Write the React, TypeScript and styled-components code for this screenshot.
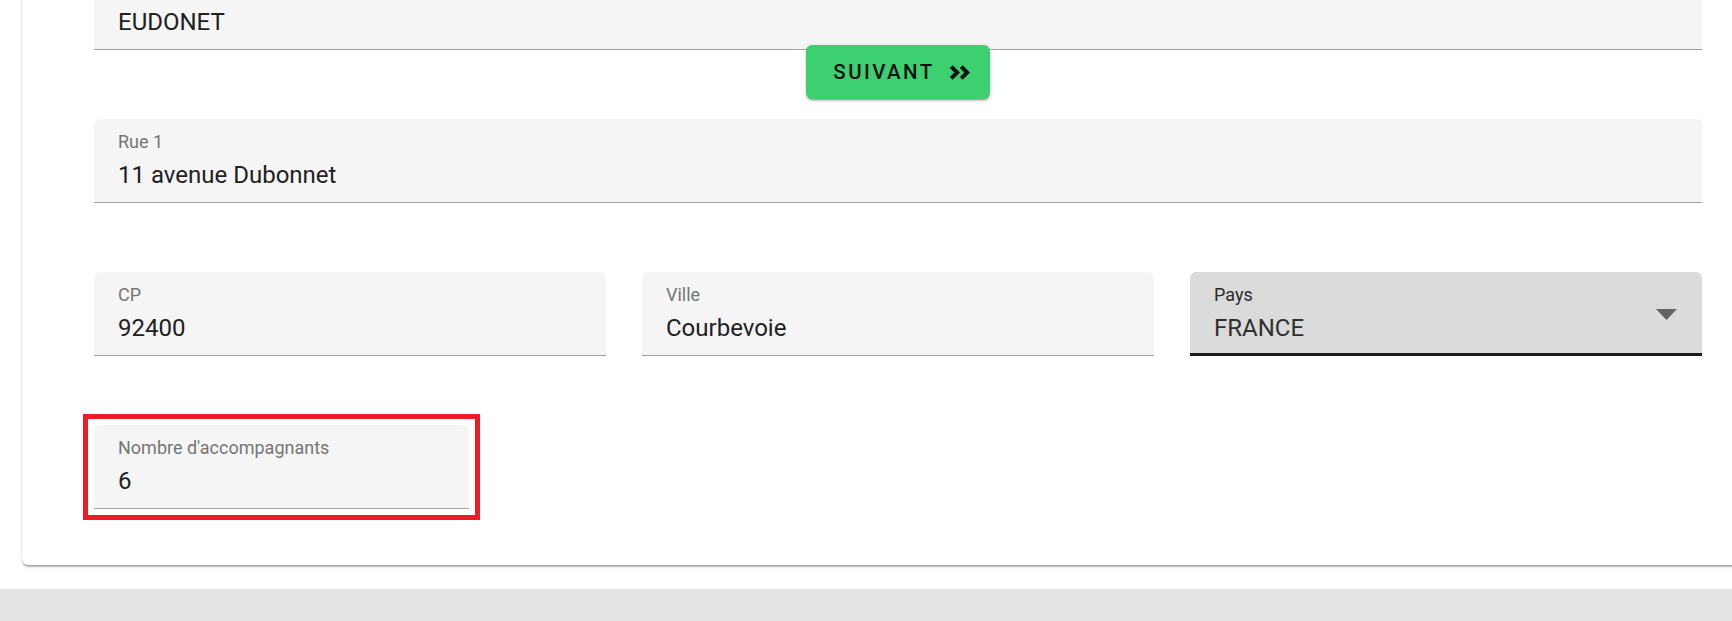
import React from "react";
import styled, { createGlobalStyle } from "styled-components";

const GlobalStyle = createGlobalStyle`
  html, body {
    margin: 0;
    padding: 0;
    background: #ffffff;
    overflow: hidden;
  }

  body {
    font-family: Roboto, "Liberation Sans", Arial, sans-serif;
    color: #212121;
  }

  * {
    box-sizing: border-box;
  }
`;

const Page = styled.div`
  width: 1732px;
  height: 621px;
  display: flex;
  overflow: hidden;
  flex-direction: column;
`;

const Main = styled.main`
  display: flex;
  padding: 0 0 24px 22px;
`;

const Card = styled.section`
  width: 1752px;
  flex-shrink: 0;
  margin-top: -60px;
  background: #ffffff;
  border-radius: 6px;
  padding: 26px 72px 56px 72px;
  box-shadow: 0 3px 2px -1px rgba(0, 0, 0, 0.22), 0 1px 1px 0 rgba(0, 0, 0, 0.14),
    0 1px 4px 0 rgba(0, 0, 0, 0.12);
`;

const Form = styled.div`
  display: flex;
  flex-direction: column;
`;

const Row = styled.div<{ $mt?: number; $cols?: number }>`
  display: grid;
  column-gap: 36px;
  margin-top: ${(p) => p.$mt ?? 0}px;
  grid-template-columns: repeat(${(p) => p.$cols ?? 1}, 1fr);
`;

const ButtonRow = styled.div`
  display: flex;
  margin-top: -5px;
  margin-bottom: 20px;
  justify-content: center;
`;

const NextButton = styled.button`
  height: 54px;
  border: none;
  display: flex;
  cursor: pointer;
  color: #111111;
  font-size: 20.5px;
  font-weight: 500;
  align-items: center;
  border-radius: 6px;
  letter-spacing: 2.4px;
  background: #3cd070;
  padding: 0 18px 0 27px;
  font-family: Roboto, "Liberation Sans", Arial, sans-serif;
  box-shadow: 0 3px 1px -2px rgba(0, 0, 0, 0.2), 0 2px 2px 0 rgba(0, 0, 0, 0.14),
    0 1px 5px 0 rgba(0, 0, 0, 0.12);

  svg {
    margin-left: 14px;
  }
`;

const FieldBox = styled.div<{ $active?: boolean }>`
  height: 84px;
  display: flex;
  padding: 14px 24px 0;
  border-radius: 6px 6px 0 0;
  justify-content: space-between;
  background: ${(p) => (p.$active ? "#dbdbdb" : "#f5f5f5")};
  border-bottom: ${(p) => (p.$active ? "3px solid #1c1c1c" : "1px solid #a2a2a2")};
`;

const Highlighted = styled.div`
  outline: 5px solid #ed1c24;
  outline-offset: 6px;
`;

const FieldContent = styled.div`
  display: flex;
  min-width: 0;
  flex-direction: column;
`;

const Label = styled.span<{ $active?: boolean }>`
  height: 18px;
  font-size: 18px;
  line-height: 18px;
  white-space: nowrap;
  color: ${(p) => (p.$active ? "#2a2a2a" : "#757575")};
`;

const Value = styled.span<{ $muted?: boolean }>`
  font-size: 24px;
  margin-top: 12px;
  line-height: 24px;
  white-space: nowrap;
  color: ${(p) => (p.$muted ? "#303030" : "#212121")};
`;

const DropIcon = styled.svg`
  flex-shrink: 0;
  margin-top: 23px;
  margin-right: 1px;
`;

const Footer = styled.footer`
  flex: 1;
  background: #e4e4e4;
`;

type FieldProps = {
  label?: string;
  value: string;
};

const TextField = ({ label, value }: FieldProps) => (
  <FieldBox>
    <FieldContent>
      <Label>{label}</Label>
      <Value>{value}</Value>
    </FieldContent>
  </FieldBox>
);

const SelectField = ({ label, value }: FieldProps) => (
  <FieldBox $active>
    <FieldContent>
      <Label $active>{label}</Label>
      <Value $muted>{value}</Value>
    </FieldContent>
    <DropIcon width="21" height="11" viewBox="0 0 21 11">
      <path d="M0 0 L21 0 L10.5 11 Z" fill="#646464" />
    </DropIcon>
  </FieldBox>
);

const DoubleChevron = () => (
  <svg width="23" height="15" viewBox="0 0 23 15">
    <path
      d="M2.2 1.6 L8.2 7.5 L2.2 13.4 M12.2 1.6 L18.2 7.5 L12.2 13.4"
      fill="none"
      stroke="#111111"
      strokeWidth="4"
      strokeLinejoin="miter"
    />
  </svg>
);

export default function App() {
  return (
    <>
      <GlobalStyle />
      <Page>
        <Main>
          <Card>
            <Form>
              {/* the label of this first field lies above the visible area */}
              <TextField value="EUDONET" />
              <ButtonRow>
                <NextButton>
                  SUIVANT
                  <DoubleChevron />
                </NextButton>
              </ButtonRow>
              <TextField label="Rue 1" value="11 avenue Dubonnet" />
              <Row $mt={69} $cols={3}>
                <TextField label="CP" value="92400" />
                <TextField label="Ville" value="Courbevoie" />
                <SelectField label="Pays" value="FRANCE" />
              </Row>
              <Row $mt={69} $cols={4}>
                <Highlighted>
                  <TextField label="Nombre d'accompagnants" value="6" />
                </Highlighted>
              </Row>
            </Form>
          </Card>
        </Main>
        <Footer />
      </Page>
    </>
  );
}
